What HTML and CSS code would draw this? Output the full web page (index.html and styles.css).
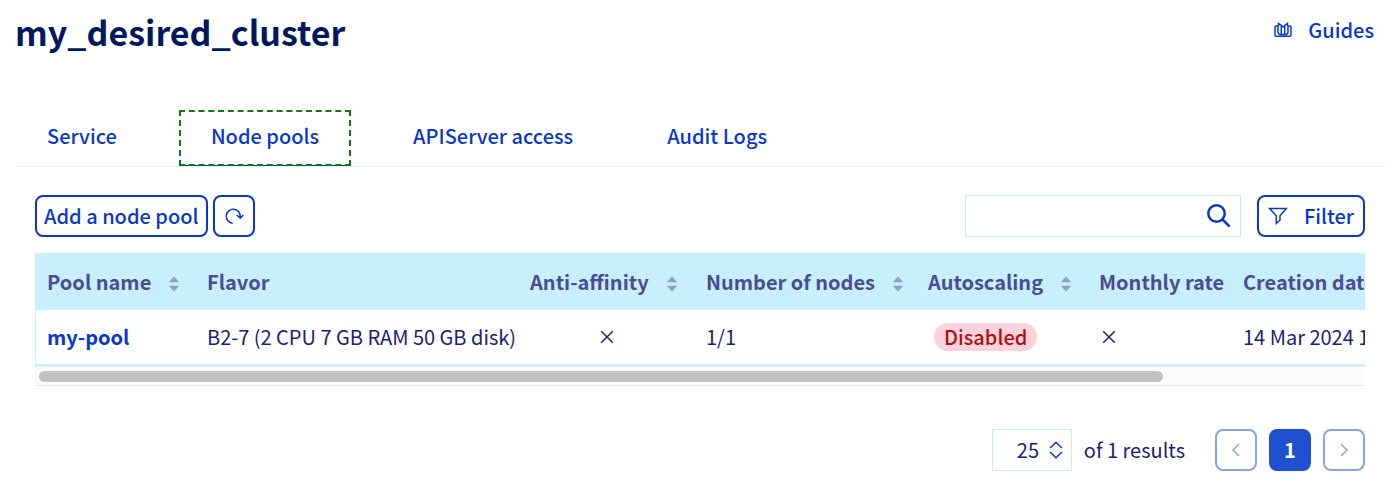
FILE: index.html
```html
<!DOCTYPE html>
<html lang="en">
<head>
<meta charset="utf-8">
<meta name="viewport" content="width=device-width, initial-scale=1">
<title>my_desired_cluster</title>
<link rel="stylesheet" href="styles.css">
</head>
<body>
<header class="page-header">
  <h1 class="page-title">my_desired_cluster</h1>
  <a class="guides" href="#guides">
    <svg class="guides-icon" width="18" height="16" viewBox="0 0 18 16" aria-hidden="true"><path d="M4 4H2Q1 4 1 5V13Q1 14.300 2.300 14.300H15.700Q17 14.300 17 13V5Q17 4 16 4H14M4 4V10Q4 12.300 6.500 12.500H11.500Q14 12.300 14 10V4M4.500 4V1.500L7.300 3.500V12.500M13.500 4V1.500L10.700 3.500V12.500M7.300 3.500L9 5L10.700 3.500"/></svg>
    <span>Guides</span>
  </a>
</header>

<nav class="tabs" aria-label="Cluster sections">
  <a class="tab" href="#service">Service</a>
  <a class="tab tab-active" href="#node-pools" aria-current="page">Node pools</a>
  <a class="tab" href="#apiserver">APIServer access</a>
  <a class="tab" href="#audit">Audit Logs</a>
</nav>

<main class="content">
  <div class="toolbar">
    <button class="button" type="button">Add a node pool</button>
    <button class="button button-square" type="button" aria-label="Refresh">
      <svg width="20" height="18" viewBox="0 0 20 18" aria-hidden="true"><path d="M8.700 16.200A7 7 0 1 1 16.200 10M12.800 8L16.300 11.200L19.300 8"/></svg>
    </button>
    <div class="search">
      <input class="search-input" type="search" aria-label="Search node pools">
      <button class="search-button" type="button" aria-label="Search">
        <svg width="26" height="26" viewBox="0 0 26 26" aria-hidden="true"><circle cx="10.500" cy="10.500" r="8.200"/><path d="M16.500 16.500L23.700 23.700"/></svg>
      </button>
    </div>
    <button class="button filter-button" type="button">
      <svg width="20" height="18" viewBox="0 0 20 18" aria-hidden="true"><path d="M1.500 1.500H18.300L12 8.700V13.200L8.300 16.300V8.700Z"/></svg>
      <span>Filter</span>
    </button>
  </div>

  <div class="table-scroll">
    <table class="pools">
      <colgroup><col class="col-name"><col class="col-flavor"><col class="col-affinity"><col class="col-nodes"><col class="col-scaling"><col class="col-rate"><col class="col-date"></colgroup>
      <thead>
        <tr>
          <th scope="col"><span class="sortable">Pool name <svg class="sort" width="12" height="16" viewBox="0 0 12 16" aria-hidden="true"><path d="M.8 6.200L6 .6L11.200 6.200ZM.8 9.800H11.200L6 15.400Z"/></svg></span></th>
          <th scope="col">Flavor</th>
          <th scope="col"><span class="sortable">Anti-affinity <svg class="sort" width="12" height="16" viewBox="0 0 12 16" aria-hidden="true"><path d="M.8 6.200L6 .6L11.200 6.200ZM.8 9.800H11.200L6 15.400Z"/></svg></span></th>
          <th scope="col"><span class="sortable">Number of nodes <svg class="sort" width="12" height="16" viewBox="0 0 12 16" aria-hidden="true"><path d="M.8 6.200L6 .6L11.200 6.200ZM.8 9.800H11.200L6 15.400Z"/></svg></span></th>
          <th scope="col"><span class="sortable">Autoscaling <svg class="sort" width="12" height="16" viewBox="0 0 12 16" aria-hidden="true"><path d="M.8 6.200L6 .6L11.200 6.200ZM.8 9.800H11.200L6 15.400Z"/></svg></span></th>
          <th scope="col">Monthly rate</th>
          <th scope="col">Creation date</th>
        </tr>
      </thead>
      <tbody>
        <tr>
          <td><a class="pool-link" href="#my-pool">my-pool</a></td>
          <td>B2-7 (2 CPU 7 GB RAM 50 GB disk)</td>
          <td class="cell-affinity"><svg class="cross" width="14" height="14" viewBox="0 0 14 14" role="img" aria-label="No"><path d="M1.200 1.200L12.800 12.800M12.800 1.200L1.200 12.800"/></svg></td>
          <td>1/1</td>
          <td class="cell-badge"><span class="badge">Disabled</span></td>
          <td class="cell-rate"><svg class="cross" width="14" height="14" viewBox="0 0 14 14" role="img" aria-label="No"><path d="M1.200 1.200L12.800 12.800M12.800 1.200L1.200 12.800"/></svg></td>
          <td>14 Mar 2024 15:02:11</td>
        </tr>
      </tbody>
    </table>
  </div>
  <div class="scroll-track"><div class="scroll-thumb"></div></div>

  <footer class="pagination">
    <span class="page-size">
      <select class="page-size-select" id="page-size"><option>25</option><option>50</option></select>
      <svg class="page-size-icon" width="14" height="18" viewBox="0 0 14 18" aria-hidden="true"><path d="M1 7L7 1.200L13 7M1 11L7 16.800L13 11"/></svg>
    </span>
    <label class="results" for="page-size">of 1 results</label>
    <button class="button button-square" type="button" aria-label="Previous page" disabled><svg width="10" height="14" viewBox="0 0 10 14" aria-hidden="true"><path d="M8 1L2 7L8 13"/></svg></button>
    <button class="button button-square button-current" type="button" aria-current="page">1</button>
    <button class="button button-square" type="button" aria-label="Next page" disabled><svg width="10" height="14" viewBox="0 0 10 14" aria-hidden="true"><path d="M2 1L8 7L2 13"/></svg></button>
  </footer>
</main>
</body>
</html>
```
FILE: styles.css
```css
* { box-sizing: border-box; }

body {
  margin: 0;
  padding: 0 15px;
  background: #fff;
  color: #1c2178;
  font-family: "Noto Sans CJK SC", "Open Sans", sans-serif;
  font-size: 20px;
  line-height: 28px;
}

svg { display: block; flex: none; fill: none; stroke: currentColor; stroke-width: 1.5; }
a { color: #0a37cb; text-decoration: none; }
button, input, select { margin: 0; font: inherit; color: inherit; }

.page-header {
  display: flex;
  justify-content: space-between;
  align-items: flex-start;
  height: 110px;
  padding: 8px 11px 0 0;
}

.page-title {
  margin: 0;
  color: #00185e;
  font-size: 34px;
  line-height: 48px;
  font-weight: 700;
}

.guides {
  display: flex;
  align-items: center;
  gap: 16px;
  padding-top: 8px;
  font-weight: 500;
}

.tabs {
  display: flex;
  gap: 30px;
  border-bottom: 1px solid #d9f4fd;
}

.tab {
  padding: 10px 30px 14px;
  border: 2px solid transparent;
  font-weight: 500;
}

.tab-active {
  border: 2px dashed #0c7a0c;
  background: linear-gradient(#0a37cb, #0a37cb) bottom / 100% 1px no-repeat border-box;
}

.content { padding: 28px 20px 0; }

.toolbar {
  display: flex;
  gap: 5px;
  margin-bottom: 16px;
}

.button {
  display: flex;
  align-items: center;
  justify-content: center;
  height: 42px;
  padding: 0 7px;
  border: 2px solid #0a37cb;
  border-radius: 8px;
  background: #fff;
  color: #0a37cb;
  font-weight: 500;
}

.button-square { width: 42px; padding: 0; }
.button:disabled { border-color: #85a5e8; color: #85a5e8; }
.button-current { background: #1f50d0; border-color: #1f50d0; color: #fff; font-weight: 700; }

.search {
  display: flex;
  align-items: center;
  width: 276px;
  height: 42px;
  margin-left: auto;
  padding: 0 8px;
  border: 1px solid #c5f0fd;
}

.search-input {
  flex: 1;
  min-width: 0;
  border: 0;
  outline: 0;
  background: transparent;
}

.search-button {
  padding: 0;
  border: 0;
  background: transparent;
  color: #0a37cb;
}

.search-button svg { stroke-width: 2.5; }
.filter-button { gap: 16px; margin-left: 11px; padding: 0 9px; }

.table-scroll { overflow-x: auto; scrollbar-width: none; }

.pools {
  width: 1572px;
  table-layout: fixed;
  border-collapse: separate;
  border-spacing: 0;
  border-left: 1px solid #c7effe;
  border-bottom: 2px solid #c7effe;
}

.col-name { width: 159px; }
.col-flavor { width: 323px; }
.col-affinity { width: 176px; }
.col-nodes { width: 222px; }
.col-scaling { width: 171px; }
.col-rate { width: 144px; }

.pools th {
  height: 57px;
  padding: 0 12px;
  background: #c7effe;
  color: #4b4c91;
  text-align: left;
  font-weight: 700;
  white-space: nowrap;
}

.pools td { height: 54px; padding: 0 12px; white-space: nowrap; }
.pools th:first-child, .pools td:first-child { padding-left: 11px; }
.sortable { display: flex; align-items: center; gap: 17px; }
.sort { margin-top: 4px; fill: #8ba1ca; stroke: none; }
.pool-link { font-weight: 700; }
.cross { display: block; }
.pools .cell-affinity { padding-left: 82px; }
.pools .cell-badge { padding-left: 18px; }
.pools .cell-rate { padding-left: 15px; }

.badge {
  display: inline-block;
  padding: 0 10px;
  border-radius: 14px;
  background: #f8d2dc;
  color: #b0100c;
  font-weight: 500;
}

.scroll-track {
  padding: 4px 4px 3px;
  border: solid #ebebeb;
  border-width: 1px 0;
  background: #fafafa;
}

.scroll-thumb { width: 85%; height: 11px; border-radius: 6px; background: #c1c1c1; }

.pagination {
  display: flex;
  justify-content: flex-end;
  align-items: center;
  gap: 12px;
  padding-top: 43px;
}

.page-size { position: relative; }

.page-size-select {
  display: block;
  width: 80px;
  height: 42px;
  padding: 0 0 0 24px;
  border: 1px solid #c5f0fd;
  border-radius: 0;
  background: #fff;
  appearance: none;
}

.page-size-icon {
  position: absolute;
  top: 12px;
  right: 9px;
  color: #0a37cb;
  pointer-events: none;
}

.results { margin-right: 18px; }
```
